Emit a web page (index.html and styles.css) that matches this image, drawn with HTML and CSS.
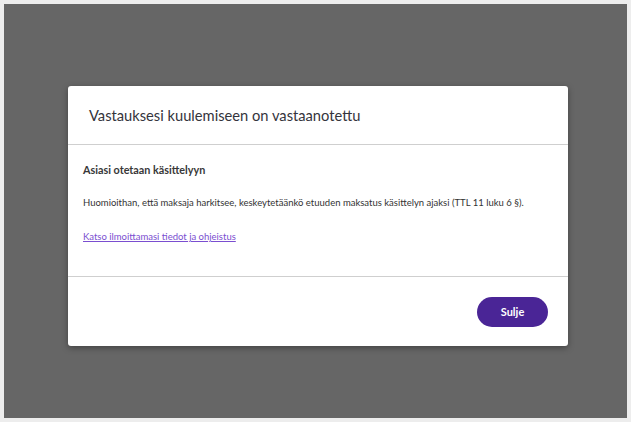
FILE: index.html
```html
<!DOCTYPE html>
<html lang="fi">
<head>
<meta charset="utf-8">
<link rel="stylesheet" href="styles.css">
</head>
<body>
<div class="overlay">
  <div class="modal" role="dialog">
    <div class="modal-header">
      <h2 class="modal-title">Vastauksesi kuulemiseen on vastaanotettu</h2>
    </div>
    <div class="modal-body">
      <h3 class="body-title">Asiasi otetaan käsittelyyn</h3>
      <p class="body-text">Huomioithan, että maksaja harkitsee, keskeytetäänkö etuuden maksatus käsittelyn ajaksi (TTL 11 luku 6 §).</p>
      <a class="body-link" href="#">Katso ilmoittamasi tiedot ja ohjeistus</a>
    </div>
    <div class="modal-footer">
      <button class="btn-close" type="button">Sulje</button>
    </div>
  </div>
</div>
</body>
</html>
```

FILE: styles.css
```css
html, body {
  margin: 0;
  padding: 0;
}
body {
  background: #ededed;
  padding: 4px;
  font-family: Lato, "Open Sans", sans-serif;
  color: #333;
}
.overlay {
  background: #666666;
  width: 623px;
  height: 414px;
  padding: 82px 0 0 64px;
  box-sizing: border-box;
}
.modal {
  width: 500px;
  background: #fff;
  border-radius: 3px;
  box-shadow: 0 2px 6px rgba(0,0,0,0.35);
  display: flex;
  flex-direction: column;
}
.modal-header {
  height: 58px;
  display: flex;
  align-items: center;
  padding: 0 21px;
  border-bottom: 1px solid #cfcfcf;
}
.modal-title {
  margin: 0;
  font-size: 14.7px;
  font-weight: 400;
  color: #34343c;
}
.modal-body {
  height: 132px;
  box-sizing: border-box;
  padding: 18px 15px 0;
  border-bottom: 1px solid #cfcfcf;
  display: flex;
  flex-direction: column;
  align-items: flex-start;
}
.body-title {
  margin: 0;
  font-size: 10.8px;
  font-weight: 700;
  color: #383838;
  line-height: 14px;
}
.body-text {
  margin: 20px 0 0;
  font-size: 9.5px;
  line-height: 12px;
  color: #333;
}
.body-link {
  margin-top: 22px;
  font-size: 9.5px;
  line-height: 12px;
  color: #7a4ed0;
  text-decoration: underline;
}
.modal-footer {
  height: 69px;
  display: flex;
  align-items: center;
  justify-content: flex-end;
  padding: 0 20px;
}
.btn-close {
  width: 71px;
  height: 30px;
  border: none;
  border-radius: 15px;
  background: #4a2596;
  color: #fff;
  font-family: Lato, sans-serif;
  font-size: 11px;
  font-weight: 700;
  cursor: pointer;
}
```
